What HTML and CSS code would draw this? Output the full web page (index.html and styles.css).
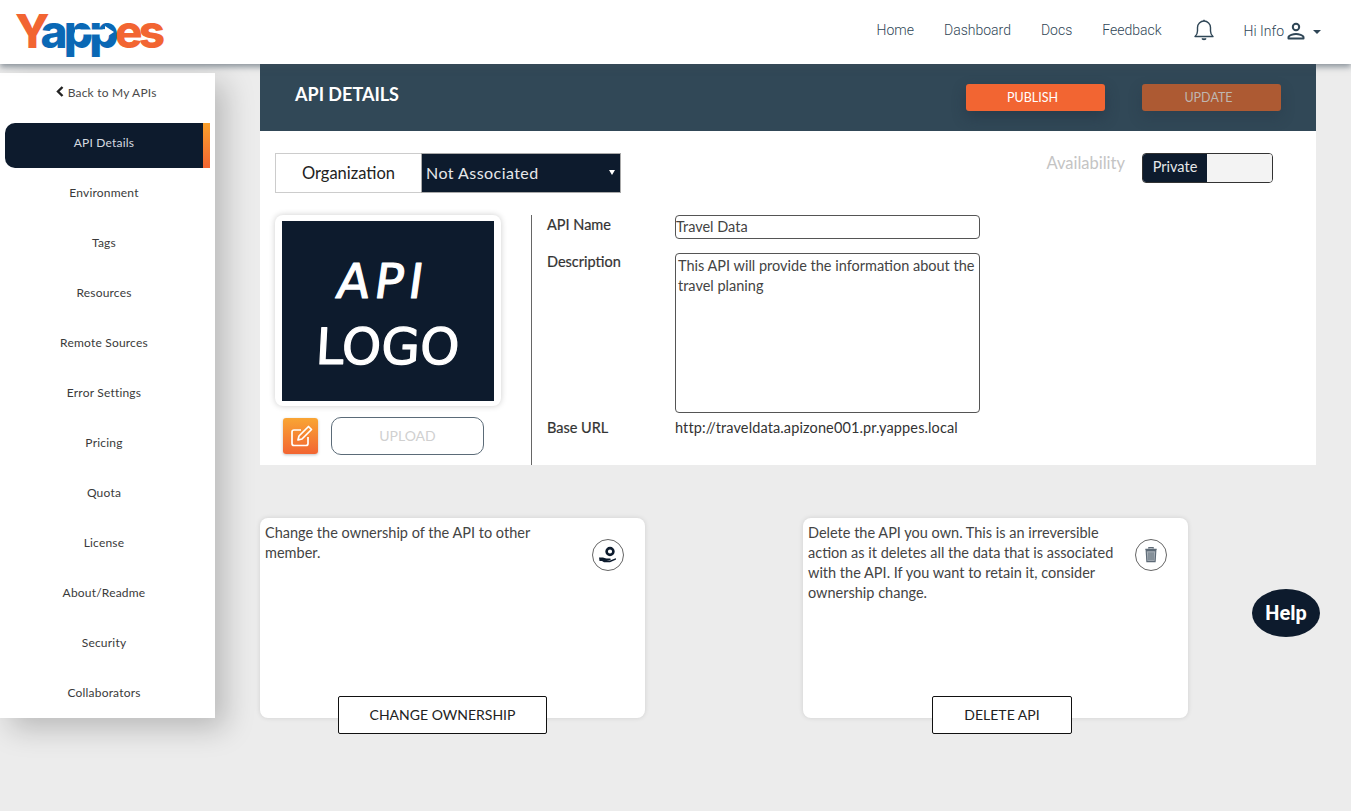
FILE: index.html
```html
<!DOCTYPE html>
<html lang="en">

<head>
    <meta charset="UTF-8">
    <meta name="viewport" content="width=device-width, initial-scale=1.0">
    <title>Yappes - API Details</title>
    <link rel="stylesheet" href="styles.css">
</head>

<body>
    <header class="topbar">
        <a class="logo"><span class="logo-o">Y</span><span class="logo-b">app</span><span class="logo-o">es</span>
            <svg class="logo-arrow" width="46" height="16" viewBox="0 0 46 16">
                <path d="M0 5.500h30V2l9 6-9 6v-3.500H0z" fill="#fff"/>
            </svg>
        </a>
        <nav class="topnav">
            <a>Home</a>
            <a>Dashboard</a>
            <a>Docs</a>
            <a>Feedback</a>
        </nav>
        <svg class="bell" width="20" height="22" viewBox="0 0 20 22" fill="none" stroke="#2f4656" stroke-width="1.4">
            <path d="M1 17.500c2-1.600 2.500-3 2.500-5.500V8.500a6.500 6.500 0 0 1 13 0V12c0 2.500.5 3.900 2.500 5.500z" stroke-linejoin="round"/>
            <path d="M8 19.500c.4 1.300 3.600 1.300 4 0" fill="#2f4656"/>
            <path d="M10 .8v1.200"/>
        </svg>
        <div class="user">
            <span>Hi Info</span>
            <svg width="20" height="20" viewBox="0 0 20 20" fill="none" stroke="#2f4656" stroke-width="2">
                <circle cx="10" cy="6" r="3.200"/>
                <path d="M2.500 17.500v-1.300c0-2 5-3.200 7.500-3.200s7.500 1.200 7.500 3.200v1.300z" stroke-linejoin="round"/>
            </svg>
            <i class="caret"></i>
        </div>
    </header>

    <div class="page">
        <aside class="sidebar">
            <a class="back"><svg width="8" height="11" viewBox="0 0 8 11"><path d="M6.500 1 2 5.500 6.500 10" fill="none" stroke="#222" stroke-width="2.400"/></svg> Back to My APIs</a>
            <a class="side-item active">API Details</a>
            <a class="side-item">Environment</a>
            <a class="side-item">Tags</a>
            <a class="side-item">Resources</a>
            <a class="side-item">Remote Sources</a>
            <a class="side-item">Error Settings</a>
            <a class="side-item">Pricing</a>
            <a class="side-item">Quota</a>
            <a class="side-item">License</a>
            <a class="side-item">About/Readme</a>
            <a class="side-item">Security</a>
            <a class="side-item">Collaborators</a>
        </aside>

        <main class="content">
            <section class="title-band">
                <h1>API DETAILS</h1>
                <div class="title-actions">
                    <button class="btn-publish">PUBLISH</button>
                    <button class="btn-update">UPDATE</button>
                </div>
            </section>

            <section class="details">
                <div class="details-top">
                    <div class="org">
                        <label class="org-label">Organization</label>
                        <div class="select-wrap">
                            <select class="org-select">
                                <option>Not Associated</option>
                            </select>
                        </div>
                    </div>
                    <div class="avail">
                        <span class="avail-label">Availability</span>
                        <div class="toggle">
                            <span class="toggle-on">Private</span>
                            <span class="toggle-off"></span>
                        </div>
                    </div>
                </div>

                <div class="details-body">
                    <div class="logo-col">
                        <div class="logo-card">
                            <svg class="logo-img" width="212" height="180" viewBox="0 0 212 180">
                                <rect width="212" height="180" fill="#0d1b2d"/>
                                <g class="logo-word">
                                    <text x="0" y="0" transform="translate(53 77) skewX(-8)" font-size="48" letter-spacing="5">API</text>
                                    <text x="0" y="0" transform="translate(33 143) skewX(-3)" font-size="50">LOGO</text>
                                </g>
                            </svg>
                        </div>
                        <div class="logo-actions">
                            <span class="edit-btn">
                                <svg width="24" height="24" viewBox="0 0 24 24" fill="none" stroke="#fff" stroke-width="1.700">
                                    <path d="M19 13v6.500a2 2 0 0 1-2 2H5a2 2 0 0 1-2-2V8a2 2 0 0 1 2-2h7"/>
                                    <path d="M9 16l1-4L19.500 2.500l3 3L13 15z" stroke-linejoin="round"/>
                                </svg>
                            </span>
                            <button class="upload-btn">UPLOAD</button>
                        </div>
                    </div>

                    <div class="form-col">
                        <div class="form-row row-name">
                            <label>API Name</label>
                            <input class="field" type="text" value="Travel Data">
                        </div>
                        <div class="form-row row-desc">
                            <label>Description</label>
                            <textarea class="field area">This API will provide the information about the travel planing</textarea>
                        </div>
                        <div class="form-row row-url">
                            <label>Base URL</label>
                            <span class="url">http://traveldata.apizone001.pr.yappes.local</span>
                        </div>
                    </div>
                </div>
            </section>

            <section class="cards">
                <div class="card">
                    <div class="card-top">
                        <p>Change the ownership of the API to other member.</p>
                        <span class="round-icon">
                            <svg width="20" height="20" viewBox="0 0 20 20">
                                <circle cx="12" cy="6.500" r="3.400" fill="none" stroke="#0d1b2d" stroke-width="2.600"/>
                                <path d="M1 12.500h4c1 0 2 1 3.500 1H12c1 0 1 1.500 0 1.500H8.500l3.500.4 5-2c1-.3 1.500.8.700 1.300L12 17.300H6L4 16H1.500z" fill="#0d1b2d"/>
                            </svg>
                        </span>
                    </div>
                    <button class="card-btn btn-owner">CHANGE OWNERSHIP</button>
                </div>
                <div class="card">
                    <div class="card-top">
                        <p>Delete the API you own. This is an irreversible action as it deletes all the data that is associated with the API. If you want to retain it, consider ownership change.</p>
                        <span class="round-icon">
                            <svg width="14" height="18" viewBox="0 0 16 20">
                                <path d="M5.500 2.500V1.500h5v1M1.500 3.500h13" fill="none" stroke="#5d6a76" stroke-width="1.300"/>
                                <path d="M2.500 5h11l-.8 12.500H3.300z" fill="#a7afb7" stroke="#5d6a76" stroke-width="1.300"/>
                                <path d="M5.700 7v9M8 7v9M10.300 7v9" stroke="#5d6a76" stroke-width="1"/>
                            </svg>
                        </span>
                    </div>
                    <button class="card-btn btn-delete">DELETE API</button>
                </div>
            </section>
        </main>
    </div>

    <div class="help">Help</div>
</body>

</html>
```

FILE: styles.css
```css
/* base */
body {
    margin: 0;
    background-color: #ececec;
    font-family: 'Lato', sans-serif;
    color: #333;
    height: 811px;
    overflow: hidden;
}

button {
    font-family: inherit;
    cursor: pointer;
}

/* top bar */
.topbar {
    position: relative;
    z-index: 5;
    display: flex;
    align-items: center;
    height: 64px;
    padding-right: 30px;
    background-color: #fff;
    box-shadow: 0 3px 6px rgba(60, 75, 90, 0.55);
}

.logo {
    position: relative;
    margin-left: 15px;
    margin-top: -3px;
    font-family: 'Inter', sans-serif;
    font-size: 46px;
    font-weight: 800;
    letter-spacing: -3.800px;
    line-height: 60px;
}

.logo-o {
    color: #f26532;
}

.logo-b {
    color: #0a68b5;
}

/* white arrow cut through the two p's */
.logo-arrow {
    position: absolute;
    left: 60px;
    top: 23px;
}

.topnav {
    display: flex;
    gap: 30px;
    margin-left: auto;
    margin-top: -4px;
    font-family: 'Roboto', sans-serif;
    font-size: 14px;
    font-weight: 300;
    color: #2f4656;
}

.bell {
    margin-left: 32px;
    margin-top: -5px;
}

.user {
    display: flex;
    align-items: center;
    margin-left: 30px;
    margin-top: -2px;
    font-family: 'Roboto', sans-serif;
    font-size: 14px;
    font-weight: 300;
    color: #2f4656;
}

.user svg {
    margin-left: 2px;
}

.caret {
    margin-left: 7px;
    margin-top: 2px;
    border-top: 4px solid #2f4656;
    border-left: 4px solid transparent;
    border-right: 4px solid transparent;
}

/* page layout */
.page {
    display: flex;
    align-items: flex-start;
}

.sidebar {
    display: flex;
    flex-direction: column;
    box-sizing: border-box;
    width: 215px;
    height: 645px;
    margin-top: 9px;
    background-color: #fff;
    box-shadow: 10px 10px 28px rgba(0, 0, 0, 0.22);
    font-size: 12px;
    letter-spacing: 0.2px;
    color: #3a3a3a;
}

.back {
    height: 45px;
    padding-top: 5px;
    padding-right: 2px;
    box-sizing: border-box;
    text-align: center;
    font-size: 12px;
    line-height: 30px;
    color: #4a4a4a;
}

.side-item {
    box-sizing: border-box;
    height: 45px;
    width: 205px;
    margin: 5px 0 0 5px;
    padding-right: 7px;
    line-height: 40px;
    text-align: center;
}

.side-item.active {
    position: relative;
    background-color: #0d1b2d;
    color: #d5dae0;
    border-radius: 10px 0 0 10px;
}

/* orange marker on the selected item */
.side-item.active::after {
    content: "";
    position: absolute;
    top: 0;
    right: 0;
    width: 7px;
    height: 100%;
    background: linear-gradient(#f9a02c, #f26532);
}

.content {
    width: 1056px;
    margin-left: 45px;
}

.title-band {
    display: flex;
    justify-content: space-between;
    box-sizing: border-box;
    height: 67px;
    padding: 20px 35px 0 35px;
    background-color: #314857;
}

.title-band h1 {
    margin: 0;
    font-size: 18px;
    font-weight: 700;
    line-height: 20px;
    color: #fff;
}

.title-actions {
    display: flex;
    gap: 37px;
}

.title-actions button {
    width: 139px;
    height: 27px;
    padding: 0 6px 0 0;
    border: none;
    border-radius: 3px;
    font-size: 12.500px;
}

.btn-publish {
    background-color: #f26532;
    color: #fff;
    box-shadow: 0 6px 14px rgba(30, 45, 60, 0.45);
}

.btn-update {
    background-color: #ad5a33;
    color: #bfb6b0;
    box-shadow: 0 6px 14px rgba(30, 45, 60, 0.25);
}

/* details panel */
.details {
    box-sizing: border-box;
    height: 334px;
    padding: 22px 0 0 15px;
    background-color: #fff;
}

.details-top {
    display: flex;
    justify-content: space-between;
    padding-right: 43px;
}

.org {
    display: flex;
    height: 40px;
}

.org-label {
    box-sizing: border-box;
    width: 146px;
    border: 1px solid #ccc;
    border-right: none;
    text-align: center;
    font-size: 16.500px;
    line-height: 38px;
    color: #222;
}

.select-wrap {
    position: relative;
    width: 200px;
    height: 40px;
}

/* small white arrow of the select */
.select-wrap::after {
    content: "";
    position: absolute;
    right: 6px;
    top: 17px;
    border-top: 5px solid #fff;
    border-left: 3px solid transparent;
    border-right: 3px solid transparent;
}

.org-select {
    appearance: none;
    box-sizing: border-box;
    width: 200px;
    height: 40px;
    padding: 0 0 2px 4px;
    border: 1px solid #aaa;
    border-radius: 0;
    background-color: #0d1b2d;
    color: #e6e8ea;
    font-family: inherit;
    font-size: 16px;
    letter-spacing: 0.45px;
}

.avail {
    display: flex;
    align-items: flex-start;
    gap: 17px;
}

.avail-label {
    font-size: 16.500px;
    line-height: 20px;
    color: #c4c4c4;
}

.toggle {
    display: flex;
    box-sizing: border-box;
    width: 131px;
    height: 30px;
    border: 1px solid #333;
    border-radius: 4px;
    overflow: hidden;
    font-size: 14.500px;
}

.toggle-on {
    width: 64px;
    background-color: #0d1b2d;
    color: #e6e8ea;
    line-height: 26px;
    text-align: center;
}

.toggle-off {
    flex: 1;
    background-color: #f3f3f3;
}

.details-body {
    display: flex;
    margin-top: 22px;
}

.logo-col {
    box-sizing: border-box;
    width: 257px;
    height: 250px;
    border-right: 1px solid #666;
}

.logo-card {
    box-sizing: border-box;
    width: 226px;
    height: 191px;
    padding: 6px 7px;
    border-radius: 8px;
    background-color: #fff;
    box-shadow: 0 0 6px rgba(0, 0, 0, 0.2);
}

.logo-img {
    display: block;
}

.logo-word {
    font-family: 'DejaVu Sans', sans-serif;
    fill: #fff;
    stroke: #fff;
    stroke-width: 1.2px;
    stroke-linejoin: round;
}

.logo-actions {
    display: flex;
    align-items: center;
    gap: 13px;
    margin: 11px 0 0 8px;
}

.edit-btn {
    display: flex;
    align-items: center;
    justify-content: center;
    width: 35px;
    height: 36px;
    border-radius: 3px;
    background: linear-gradient(#f9a534, #f26532);
    box-shadow: 0 1px 3px rgba(0, 0, 0, 0.25);
}

.upload-btn {
    width: 153px;
    height: 38px;
    padding: 0 0 2px;
    border: 1px solid #5b6b78;
    border-radius: 10px;
    background-color: #fff;
    color: #d0d0d0;
    font-size: 14px;
}

.form-col {
    padding-left: 15px;
    font-size: 14.500px;
}

.form-row {
    display: flex;
    align-items: flex-start;
}

.form-row label {
    width: 128px;
    line-height: 20px;
    color: #333;
    -webkit-text-stroke: 0.2px #333;
}

.row-desc {
    margin-top: 14px;
}

.row-desc label {
    margin-top: -1px;
}

.row-url {
    margin-top: 5px;
}

.field {
    box-sizing: border-box;
    width: 305px;
    height: 24px;
    padding: 0 0 2px;
    border: 1px solid #555;
    border-radius: 4px;
    font-family: inherit;
    font-size: 14.500px;
    color: #444;
}

.area {
    display: block;
    height: 160px;
    padding: 2px 2px;
    line-height: 20px;
    resize: none;
}

.url {
    line-height: 20px;
    letter-spacing: 0.12px;
    color: #333;
}

/* bottom cards */
.cards {
    display: flex;
    gap: 158px;
    margin-top: 53px;
}

.card {
    display: flex;
    flex-direction: column;
    box-sizing: border-box;
    width: 385px;
    height: 200px;
    padding: 5px;
    border-radius: 8px;
    background-color: #fff;
    box-shadow: 0 0 5px rgba(0, 0, 0, 0.12);
}

.card-top {
    display: flex;
    justify-content: space-between;
}

.card-top p {
    width: 318px;
    margin: 0;
    font-size: 14.500px;
    line-height: 20px;
    color: #444;
}

.round-icon {
    display: flex;
    align-items: center;
    justify-content: center;
    flex-shrink: 0;
    box-sizing: border-box;
    width: 32px;
    height: 32px;
    margin: 16px 16px 0 0;
    border: 1px solid #666;
    border-radius: 50%;
}

.card-btn {
    height: 38px;
    padding: 0 0 2px;
    margin-top: auto;
    margin-bottom: -21px;
    align-self: flex-start;
    border: 1px solid #111;
    border-radius: 2px;
    background-color: #fff;
    color: #222;
    font-size: 14px;
}

.btn-owner {
    width: 209px;
    margin-left: 73px;
}

.btn-delete {
    width: 140px;
    margin-left: 124px;
}

/* floating help bubble */
.help {
    position: absolute;
    left: 1252px;
    top: 589px;
    width: 68px;
    height: 48px;
    border-radius: 50%;
    background-color: #0d1b2d;
    color: #fff;
    font-family: 'Roboto', sans-serif;
    font-size: 20px;
    font-weight: 700;
    line-height: 48px;
    text-align: center;
}
```
